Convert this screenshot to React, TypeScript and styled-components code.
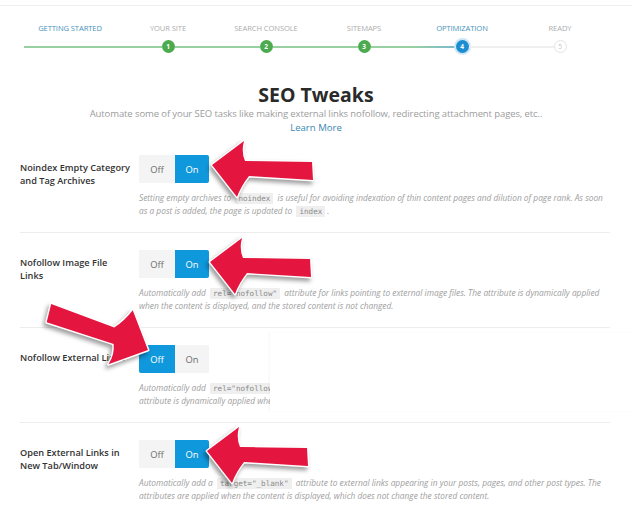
import { FC } from 'react';
import styled, { createGlobalStyle, css } from 'styled-components';

const GlobalStyle = createGlobalStyle`
  html, body {
    margin: 0;
    background: #ffffff;
  }

  body {
    font-family: 'Open Sans', 'Liberation Sans', sans-serif;
    color: #333333;
  }
`;

const Page = styled.div`
  position: relative;
  width: 632px;
  height: 515px;
  overflow: hidden;
  background: #ffffff;
`;

const TopRule = styled.div`
  height: 5px;
  border-bottom: 1px solid #f0f0f0;
`;

const Stepper = styled.div`
  display: grid;
  grid-template-columns: repeat(6, 98px);
  margin-left: 21px;
  padding-top: 17px;
`;

const Step = styled.div`
  display: flex;
  flex-direction: column;
  align-items: center;
`;

const StepLabel = styled.span<{ $lit: boolean }>`
  font-size: 7.6px;
  line-height: 10px;
  letter-spacing: -0.1px;
  white-space: nowrap;
  color: ${p => (p.$lit ? '#4a93bd' : '#adadad')};
`;

const Track = styled.div`
  display: flex;
  align-items: center;
  width: 100%;
  height: 13px;
  margin-top: 7px;
`;

const Segment = styled.span<{ $colour: string; $inset?: boolean }>`
  flex: 1;
  height: 2px;
  margin-left: ${p => (p.$inset ? '3px' : '0')};
  background: ${p => p.$colour};
`;

type DotState = 'done' | 'active' | 'todo';

const Dot = styled.span<{ $state: DotState }>`
  flex: none;
  width: 13px;
  height: 13px;
  border-radius: 50%;
  box-sizing: border-box;
  display: flex;
  align-items: center;
  justify-content: center;
  font-size: 6.5px;
  font-weight: 700;

  ${p =>
    p.$state === 'done' &&
    css`
      background: #4cab4f;
      color: #ffffff;
    `}

  ${p =>
    p.$state === 'active' &&
    css`
      background: #1b8dd0;
      color: #ffffff;
      box-shadow: 0 0 0 2px #cfe6f5;
    `}

  ${p =>
    p.$state === 'todo' &&
    css`
      background: #ffffff;
      border: 1px solid #e4e4e4;
      color: #c4c4c4;
      font-weight: 400;
    `}
`;

const Header = styled.div`
  display: flex;
  flex-direction: column;
  align-items: center;
  margin-top: 30px;
`;

const Title = styled.h1`
  margin: 0;
  font-size: 19.5px;
  line-height: 24px;
  font-weight: 700;
  color: #2a2a2a;
`;

const Subtitle = styled.p`
  margin: 0;
  font-size: 9.5px;
  line-height: 14px;
  color: #9c9c9c;
  letter-spacing: -0.1px;
`;

const LearnMore = styled.a`
  font-size: 9.6px;
  line-height: 14px;
  color: #3a88b2;
  text-decoration: none;
`;

const Rows = styled.div`
  margin-top: 2px;
  padding: 0 22px 0 20px;
`;

const Row = styled.div<{ $first?: boolean }>`
  display: grid;
  grid-template-columns: 119px 1fr;
  grid-template-rows: 28px auto;
  padding: 17px 0 15px;
  border-top: 1px solid ${p => (p.$first ? 'transparent' : '#ededed')};
`;

const Label = styled.div`
  grid-row: 1 / span 2;
  align-self: start;
  margin-top: 6px;
  font-size: 9.2px;
  line-height: 13px;
  font-weight: 600;
  color: #333333;
`;

const Toggle = styled.div`
  display: inline-flex;
  width: max-content;
  height: 28px;
  border-radius: 2px;
  overflow: hidden;
  box-shadow: inset 0 0 0 1px #ebebeb;
`;

const Option = styled.span<{ $on: boolean; $w: number }>`
  display: flex;
  align-items: center;
  justify-content: center;
  width: ${p => p.$w}px;
  font-size: 9.4px;
  color: ${p => (p.$on ? '#ffffff' : '#6d6d6d')};
  background: ${p => (p.$on ? '#0f98dc' : '#f4f4f4')};
`;

const Desc = styled.p`
  grid-column: 2;
  height: 26px;
  margin: 8px 0 0;
  font-size: 8.35px;
  line-height: 13px;
  font-style: italic;
  color: #9e9e9e;
  white-space: nowrap;
`;

const Code = styled.code`
  font-family: 'DejaVu Sans Mono', 'Liberation Mono', monospace;
  font-size: 7.6px;
  line-height: 10px;
  font-style: normal;
  color: #8a8a8a;
  background: #efefef;
  padding: 1px 3px;
  margin: 0 2px;
`;

const Cover = styled.div`
  position: absolute;
  left: 270px;
  top: 333px;
  width: 370px;
  height: 78px;
  background: #ffffff;
  box-shadow: -1px 0 2px rgba(0, 0, 0, 0.04);
`;

const Overlay = styled.svg`
  position: absolute;
  left: 0;
  top: 0;
  pointer-events: none;

  g {
    filter: drop-shadow(-2px 3px 2px rgba(0, 0, 0, 0.38));
  }

  path {
    fill: #e4163f;
    stroke: #ffffff;
    stroke-width: 2.8px;
    stroke-linejoin: round;
    paint-order: stroke;
  }
`;

const ARROW = 'M0,0 L32,-24 Q29,-13 33,-4 L100,-3 L101,15 L37,11 Q29,21 25,32 Z';

const GREEN = '#98d0a1';
const TEAL = 'linear-gradient(90deg, #98d0a1, #7bb9cf)';
const GREY = '#efefef';

const steps: { label: string; lit: boolean; dot?: DotState; left: string; right?: string }[] = [
  { label: 'GETTING STARTED', lit: true, left: GREEN, right: GREEN },
  { label: 'YOUR SITE', lit: false, dot: 'done', left: GREEN, right: GREEN },
  { label: 'SEARCH CONSOLE', lit: false, dot: 'done', left: GREEN, right: GREEN },
  { label: 'SITEMAPS', lit: false, dot: 'done', left: GREEN, right: GREEN },
  { label: 'OPTIMIZATION', lit: true, dot: 'active', left: TEAL, right: GREY },
  { label: 'READY', lit: false, dot: 'todo', left: GREY },
];

const Switch: FC<{ on: boolean }> = ({ on }) => (
  <Toggle>
    <Option $on={!on} $w={36}>Off</Option>
    <Option $on={on} $w={34}>On</Option>
  </Toggle>
);

const App: FC = () => (
  <Page>
    <GlobalStyle />
    <TopRule />

    <Stepper>
      {steps.map((s, i) => (
        <Step key={s.label}>
          <StepLabel $lit={s.lit}>{s.label}</StepLabel>
          <Track>
            <Segment $colour={s.left} $inset={i === 0} />
            {s.dot && <Dot $state={s.dot}>{i}</Dot>}
            <Segment $colour={s.right ?? 'transparent'} />
          </Track>
        </Step>
      ))}
    </Stepper>

    <Header>
      <Title>SEO Tweaks</Title>
      <Subtitle>
        Automate some of your SEO tasks like making external links nofollow, redirecting attachment pages, etc..
      </Subtitle>
      <LearnMore href="#">Learn More</LearnMore>
    </Header>

    <Rows>
      <Row $first>
        <Label>
          Noindex Empty Category
          <br />
          and Tag Archives
        </Label>
        <Switch on />
        <Desc>
          Setting empty archives to <Code>noindex</Code> is useful for avoiding indexation of thin content pages and
          dilution of page rank. As soon
          <br />
          as a post is added, the page is updated to <Code>index</Code>.
        </Desc>
      </Row>

      <Row>
        <Label>
          Nofollow Image File
          <br />
          Links
        </Label>
        <Switch on />
        <Desc>
          Automatically add <Code>rel="nofollow"</Code> attribute for links pointing to external image files. The
          attribute is dynamically applied
          <br />
          when the content is displayed, and the stored content is not changed.
        </Desc>
      </Row>

      <Row>
        <Label>Nofollow External Links</Label>
        <Switch on={false} />
        <Desc>
          Automatically add <Code>rel="nofollow"</Code> attribute for external links appearing in your posts, pages,
          and other post types. The
          <br />
          attribute is dynamically applied when the content is displayed, and the stored content is not changed.
        </Desc>
      </Row>

      <Row>
        <Label>
          Open External Links in
          <br />
          New Tab/Window
        </Label>
        <Switch on />
        <Desc>
          Automatically add a <Code>target="_blank"</Code> attribute to external links appearing in your posts, pages,
          and other post types. The
          <br />
          attributes are applied when the content is displayed, which does not change the stored content.
        </Desc>
      </Row>
    </Rows>

    <Cover />

    <Overlay width={632} height={515} viewBox="0 0 632 515">
      <g>
        <path d={ARROW} transform="translate(212 165)" />
      </g>
      <g>
        <path d={ARROW} transform="translate(210 262)" />
      </g>
      <g>
        <path d={ARROW} transform="translate(148 350) rotate(197) scale(1.05)" />
      </g>
      <g>
        <path d={ARROW} transform="translate(207 451)" />
      </g>
    </Overlay>
  </Page>
);

export default App;
